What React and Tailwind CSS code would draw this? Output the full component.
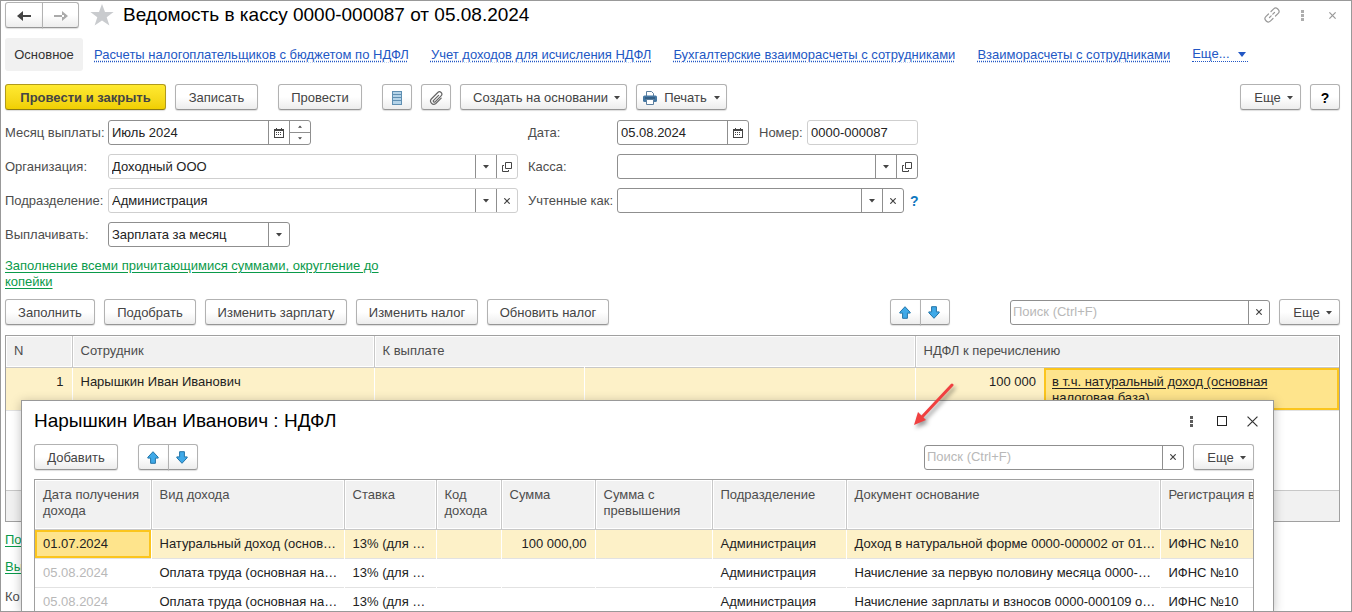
import { useState } from 'react';
import clsx from 'clsx';

const sectionLinks = [
  'Расчеты налогоплательщиков с бюджетом по НДФЛ',
  'Учет доходов для исчисления НДФЛ',
  'Бухгалтерские взаиморасчеты с сотрудниками',
  'Взаиморасчеты с сотрудниками',
];

const incomeColumns = [
  { title: 'Дата получения дохода', width: 'w-[116px]' },
  { title: 'Вид дохода', width: 'w-[193px]' },
  { title: 'Ставка', width: 'w-[92px]' },
  { title: 'Код дохода', width: 'w-[65px]' },
  { title: 'Сумма', width: 'w-[94px]' },
  { title: 'Сумма с превышения', width: 'w-[117px]' },
  { title: 'Подразделение', width: 'w-[134px]' },
  { title: 'Документ основание', width: 'w-[314px]' },
  { title: 'Регистрация в', width: 'whitespace-nowrap' },
];

const incomeRows = [
  {
    date: '01.07.2024',
    kind: 'Натуральный доход (основ…',
    rate: '13% (для …',
    sum: '100 000,00',
    base: 'Доход в натуральной форме 0000-000002 от 01…',
  },
  {
    date: '05.08.2024',
    kind: 'Оплата труда (основная на…',
    rate: '13% (для …',
    sum: '',
    base: 'Начисление за первую половину месяца 0000-…',
  },
  {
    date: '05.08.2024',
    kind: 'Оплата труда (основная на…',
    rate: '13% (для …',
    sum: '',
    base: 'Начисление зарплаты и взносов 0000-000109 о…',
  },
];

const buttonTones = {
  plain: 'border-[#b2b2b2] border-b-[#969696] from-white from-50% to-[#ededed] text-[#444]',
  primary: 'border-[#b09a1c] border-b-[#8f7c10] from-[#ffea30] to-[#f0cf00] font-bold text-[#444]',
  help: 'border-[#b2b2b2] border-b-[#969696] from-white from-50% to-[#ededed] text-sm font-bold text-black',
};

function Caret({ className = 'h-1 w-1.5' }) {
  return (
    <svg viewBox="0 0 6 4" className={clsx('shrink-0 fill-[#444]', className)} aria-hidden="true">
      <path d="M0 0h6L3 3.5z" />
    </svg>
  );
}

function CalendarIcon() {
  return (
    <svg viewBox="0 0 10 10" className="h-2.5 w-2.5" shapeRendering="crispEdges" aria-hidden="true">
      <path d="M0 1h2V0h1v1h4V0h1v1h2v9H0z" fill="#444" />
      <path d="M1 3h8v6H1z" fill="#fff" />
      <path d="M2 4h1v1H2zM4 4h1v1H4zM6 4h1v1H6zM2 6h1v1H2zM4 6h1v1H4zM6 6h1v1H6z" fill="#444" />
    </svg>
  );
}

function OpenIcon() {
  return (
    <svg viewBox="0 0 10 10" className="h-2.5 w-2.5" fill="none" stroke="#444" aria-hidden="true">
      <path d="M3.5.5h6v6h-6zM2 3.500H.5v6h6V8" />
    </svg>
  );
}

function CrossIcon({ className = 'h-1.5 w-1.5' }) {
  return (
    <svg viewBox="0 0 10 10" className={className} fill="none" stroke="currentColor" aria-hidden="true">
      <path d="M.5.5l9 9M9.5.5l-9 9" vectorEffect="non-scaling-stroke" strokeWidth="1.2" />
    </svg>
  );
}

function DotsIcon() {
  return (
    <svg viewBox="0 0 3 11" className="h-[11px] w-[3px]" fill="currentColor" shapeRendering="crispEdges" aria-hidden="true">
      <path d="M0 0h3v3H0zM0 4h3v3H0zM0 8h3v3H0z" opacity=".8" />
    </svg>
  );
}

function BlueArrow({ down = false }) {
  return (
    <svg viewBox="0 0 12 13" className={clsx('h-[13px] w-3', down && 'rotate-180')} aria-hidden="true">
      <path d="M6 .7l5.2 5.600v.8H8.400v5.200H3.600V7.100H.8v-.8z" fill="#3fa9e8" stroke="#2274a8" />
    </svg>
  );
}

function Button({ tone = 'plain', className = 'px-3', children, ...props }) {
  return (
    <button
      type="button"
      className={clsx(
        'flex h-[26px] shrink-0 items-center justify-center whitespace-nowrap rounded-[3px] border bg-linear-to-b pt-px shadow-[0_1px_1px_#00000022]',
        buttonTones[tone],
        className,
      )}
      {...props}
    >
      {children}
    </button>
  );
}

function MoreButton() {
  return (
    <Button className="w-[61px] gap-1.5 pl-1.5" aria-haspopup="menu">
      Еще
      <Caret />
    </Button>
  );
}

function MoveButtons() {
  return (
    <div className="flex">
      <Button className="w-[31px] rounded-r-none pr-0.5" aria-label="Переместить вверх">
        <BlueArrow />
      </Button>
      <Button className="-ml-px w-[30px] rounded-l-none pr-0.5" aria-label="Переместить вниз">
        <BlueArrow down />
      </Button>
    </div>
  );
}

function Field({ className = '', muted = false, children }) {
  return (
    <div
      className={clsx(
        'flex h-[25px] overflow-hidden rounded-[3px] border bg-white',
        muted ? 'border-[#cfcfcf]' : 'border-[#8f8f8f]',
        className,
      )}
    >
      {children}
    </div>
  );
}

function FieldButton({ children, ...props }) {
  return (
    <button type="button" className="flex w-[21px] shrink-0 items-center justify-center border-l border-[#8f8f8f] text-[#444]" {...props}>
      {children}
    </button>
  );
}

function Select({ id, value }) {
  return (
    <div className="relative flex min-w-0 flex-1">
      <select id={id} defaultValue={value} className="w-full appearance-none bg-transparent pl-[3px] text-[#222]">
        <option>{value}</option>
      </select>
      <span className="pointer-events-none absolute inset-y-0 right-0 flex w-[21px] items-center justify-center border-l border-[#8f8f8f]">
        <Caret />
      </span>
    </div>
  );
}

function Search({ id }) {
  return (
    <Field className="w-[260px]">
      <input id={id} type="text" aria-label="Поиск" placeholder="Поиск (Ctrl+F)" className="min-w-0 flex-1 px-0.5 placeholder:text-[#b8b8b8]" />
      <FieldButton aria-label="Очистить">
        <CrossIcon />
      </FieldButton>
    </Field>
  );
}

function TitleBar() {
  return (
    <header className="flex h-[26px] items-center">
      <div className="flex">
        <Button className="w-[38px] rounded-r-none" aria-label="Назад">
          <svg viewBox="0 0 14 10" className="h-2.5 w-3.5" aria-hidden="true">
            <path d="M6 0v10L0 5zM4 4h10v2H4z" fill="#444" />
          </svg>
        </Button>
        <Button className="-ml-px w-[37px] rounded-l-none" aria-label="Вперед">
          <svg viewBox="0 0 14 10" className="h-2.5 w-3.5" aria-hidden="true">
            <path d="M8 0v10l6-5zM0 4h10v2H0z" fill="#aaa" />
          </svg>
        </Button>
      </div>
      <button type="button" className="ml-[11px]" aria-label="В избранное">
        <svg viewBox="0 0 24 22" className="h-[22px] w-6" aria-hidden="true">
          <path d="M12 0l3 8h8.600l-6.900 5.200 2.700 8.300L12 16.400l-7.400 5.100 2.700-8.300L.4 8H9z" fill="#c9cbce" />
        </svg>
      </button>
      <h1 className="ml-[9px] text-[19px] leading-6 text-black">Ведомость в кассу 0000-000087 от 05.08.2024</h1>
      <div className="ml-auto flex items-center gap-[21px] pr-1 text-[#999]">
        <button type="button" aria-label="Получить ссылку">
          <svg viewBox="0 0 16 16" className="h-4 w-4" fill="none" stroke="currentColor" strokeWidth="1.200" strokeLinecap="round" aria-hidden="true">
            <path d="M7 4.500l2.700-2.700a2.700 2.700 0 0 1 3.800 0l.7.700a2.700 2.700 0 0 1 0 3.800L11.500 9M9 11.500l-2.700 2.700a2.700 2.700 0 0 1-3.800 0l-.7-.7a2.700 2.700 0 0 1 0-3.800L4.500 7M5.500 10.500l1.700-1.700M8.800 7.200l1.700-1.700" />
          </svg>
        </button>
        <button type="button" aria-label="Меню">
          <DotsIcon />
        </button>
        <button type="button" className="ml-1" aria-label="Закрыть">
          <CrossIcon className="h-[7px] w-[7px]" />
        </button>
      </div>
    </header>
  );
}

function SectionNav() {
  return (
    <nav className="mt-[9px] flex h-[34px] items-center gap-[22px] whitespace-nowrap pt-px text-[#2257c4]">
      <span className="-mr-[11px] flex h-full w-[78px] items-center justify-center rounded-[3px] bg-[#f1f1f1] text-[#333]">Основное</span>
      {sectionLinks.map((label) => (
        <a key={label} href="#" className="underline decoration-dotted underline-offset-2">
          {label}
        </a>
      ))}
      <a href="#" className="flex items-center gap-2 border-b border-dotted border-[#2257c4] pr-0.5 leading-3.5">
        Еще...
        <svg viewBox="0 0 8 5" className="h-[5px] w-2 fill-[#2257c4]" aria-hidden="true">
          <path d="M0 0h8L4 5z" />
        </svg>
      </a>
    </nav>
  );
}

function CommandBar() {
  return (
    <div className="mt-[13px] flex gap-[9px]">
      <Button tone="primary" className="w-[161px]">Провести и закрыть</Button>
      <Button className="w-[83px]">Записать</Button>
      <Button className="ml-[11px] w-[84px]">Провести</Button>
      <Button className="ml-[11px] w-[30px]" aria-label="Реестр">
        <svg viewBox="0 0 10 14" className="h-3.5 w-2.5" shapeRendering="crispEdges" aria-hidden="true">
          <path d="M0 0h10v14H0z" fill="#5f8fb2" />
          <path d="M1 1h8v2H1zM1 4h8v2H1zM1 7h8v2H1zM1 10h8v3H1z" fill="#b4d3e8" />
        </svg>
      </Button>
      <Button className="w-[30px]" aria-label="Присоединенные файлы">
        <svg viewBox="0 0 14 14" className="h-3.5 w-3.5" fill="none" stroke="#666" strokeWidth="1.200" strokeLinecap="round" aria-hidden="true">
          <path d="M9.600 4.300l-5 5a1 1 0 0 0 1.500 1.500l6-6a2.300 2.300 0 0 0-3.300-3.300L2.300 8a3.200 3.200 0 0 0 4.500 4.500l5.400-5.400" />
        </svg>
      </Button>
      <Button className="w-[167px] gap-1.5 pl-1.5" aria-haspopup="menu">
        Создать на основании
        <Caret />
      </Button>
      <Button className="w-[91px] gap-[7px]" aria-haspopup="menu">
        <svg viewBox="0 0 14 14" className="h-3.5 w-3.5" aria-hidden="true">
          <path d="M3.500 5V.5h5l2 2V5" fill="#fff" stroke="#5c7f9f" />
          <rect y="4.500" width="14" height="6.500" rx="1.500" fill="#4678a3" />
          <path d="M2 7h10" stroke="#24496b" />
          <path d="M3.500 8.500h7v5h-7z" fill="#fff" stroke="#5c7f9f" />
        </svg>
        Печать
        <Caret />
      </Button>
      <div className="ml-auto flex gap-[9px]">
        <MoreButton />
        <Button tone="help" className="w-[30px]">?</Button>
      </div>
    </div>
  );
}

function PaymentForm() {
  const [month, setMonth] = useState('Июль 2024');

  return (
    <form className="mt-2.5 flex gap-2.5 text-[#4d4d4d]">
      <div className="grid grid-cols-[103px_410px] items-center gap-y-[9px]">
        <label htmlFor="month">Месяц выплаты:</label>
        <Field className="w-[203px]">
          <input id="month" type="text" value={month} onChange={(e) => setMonth(e.target.value)} className="min-w-0 flex-1 px-[3px] text-[#222]" />
          <FieldButton aria-label="Выбрать месяц">
            <CalendarIcon />
          </FieldButton>
          <div className="flex w-[21px] flex-col border-l border-[#8f8f8f]">
            <button type="button" className="flex flex-1 items-center justify-center border-b border-[#8f8f8f]" aria-label="Следующий месяц">
              <Caret className="h-[3px] w-1 rotate-180" />
            </button>
            <button type="button" className="flex flex-1 items-center justify-center" aria-label="Предыдущий месяц">
              <Caret className="h-[3px] w-1" />
            </button>
          </div>
        </Field>

        <label htmlFor="organization">Организация:</label>
        <Field muted>
          <Select id="organization" value="Доходный ООО" />
          <FieldButton aria-label="Открыть организацию">
            <OpenIcon />
          </FieldButton>
        </Field>

        <label htmlFor="department">Подразделение:</label>
        <Field muted>
          <Select id="department" value="Администрация" />
          <FieldButton aria-label="Очистить подразделение">
            <CrossIcon />
          </FieldButton>
        </Field>

        <label htmlFor="payment">Выплачивать:</label>
        <Field className="w-[182px]">
          <Select id="payment" value="Зарплата за месяц" />
        </Field>
      </div>

      <div className="grid grid-cols-[89px_301px] content-start items-center gap-y-[9px]">
        <label htmlFor="date">Дата:</label>
        <div className="flex items-center">
          <Field className="w-[132px]">
            <input id="date" type="text" defaultValue="05.08.2024" className="min-w-0 flex-1 px-[3px] text-[#222]" />
            <FieldButton aria-label="Выбрать дату">
              <CalendarIcon />
            </FieldButton>
          </Field>
          <label htmlFor="number" className="ml-2.5 w-12">Номер:</label>
          <Field muted className="flex-1">
            <input id="number" type="text" defaultValue="0000-000087" className="min-w-0 flex-1 px-[3px] text-[#222]" />
          </Field>
        </div>

        <label htmlFor="cashbox">Касса:</label>
        <Field>
          <Select id="cashbox" value="" />
          <FieldButton aria-label="Открыть кассу">
            <OpenIcon />
          </FieldButton>
        </Field>

        <label htmlFor="accounted">Учтенные как:</label>
        <div className="flex items-center gap-1.5">
          <Field className="w-[287px] shrink-0">
            <Select id="accounted" value="" />
            <FieldButton aria-label="Очистить">
              <CrossIcon />
            </FieldButton>
          </Field>
          <button type="button" className="text-sm font-bold text-[#0f78c0]">?</button>
        </div>
      </div>
    </form>
  );
}

function EmployeesTable() {
  const headCell = 'border-r border-[#c8c8c8] px-2 text-left font-normal shadow-[inset_0_0_0_1px_#fff] last:border-r-0';

  return (
    <div className="mt-[10px] flex h-[187px] flex-col border border-[#a0a0a0]">
      <table className="w-full table-fixed">
        <colgroup>
          <col className="w-[66px]" />
          <col className="w-[302px]" />
          <col className="w-[210px]" />
          <col className="w-[331px]" />
          <col className="w-[129px]" />
          <col />
        </colgroup>
        <thead>
          <tr className="h-[31px] border-b border-[#c8c8c8] bg-[#f1f1f1] text-[#4d4d4d]">
            <th className={headCell}>N</th>
            <th className={headCell}>Сотрудник</th>
            <th className={headCell} colSpan={2}>К выплате</th>
            <th className={headCell} colSpan={2}>НДФЛ к перечислению</th>
          </tr>
        </thead>
        <tbody>
          <tr className="h-[43px] border-b border-[#e2e2e2] bg-[#fdf1c8] align-top leading-4 text-[#222]">
            <td className="border-r border-white px-2 pt-1.5 text-right">1</td>
            <td className="border-r border-white px-2 pt-1.5">Нарышкин Иван Иванович</td>
            <td className="border-r border-white" />
            <td className="border-r border-white" />
            <td className="px-2 pt-1.5 text-right">100 000</td>
            <td className="bg-[#fee48c] px-2 pt-1.5 shadow-[inset_0_0_0_2px_#fbc51d]">
              <a href="#" className="block w-[230px] underline underline-offset-2">
                в т.ч. натуральный доход (основная налоговая база)
              </a>
            </td>
          </tr>
        </tbody>
      </table>
      <div className="mt-auto h-[31px] border-t border-[#c8c8c8] bg-[#f1f1f1]" />
    </div>
  );
}

function IncomeDialog() {
  return (
    <section
      role="dialog"
      aria-labelledby="income-title"
      className="absolute bottom-0 left-5 right-[77px] top-[399px] overflow-hidden border border-b-0 border-[#999] bg-white px-3 shadow-[0_2px_10px_#00000040]"
    >
      <header className="mt-2 flex h-6 items-center pr-[3px] text-[#333]">
        <h2 id="income-title" className="text-[19px] text-black">Нарышкин Иван Иванович : НДФЛ</h2>
        <button type="button" className="ml-auto" aria-label="Меню">
          <DotsIcon />
        </button>
        <button type="button" className="ml-6 h-2.5 w-2.5 border border-[#222]" aria-label="Развернуть" />
        <button type="button" className="ml-5" aria-label="Закрыть">
          <CrossIcon className="h-[11px] w-[11px]" />
        </button>
      </header>

      <div className="mt-[11px] flex items-center pr-[7px]">
        <Button className="w-[84px]">Добавить</Button>
        <div className="ml-5">
          <MoveButtons />
        </div>
        <div className="ml-auto mr-[9px]">
          <Search id="income-search" />
        </div>
        <MoreButton />
      </div>

      <div className="mr-[7px] mt-[9px] overflow-hidden border border-b-0 border-[#a0a0a0]">
        <table className="w-full table-fixed">
          <thead>
            <tr className="h-[49px] border-b border-[#c8c8c8] bg-[#f1f1f1] align-top leading-4 text-[#4d4d4d]">
              {incomeColumns.map((column) => (
                <th
                  key={column.title}
                  className={clsx('border-r border-[#c8c8c8] pl-2 pt-[7px] text-left font-normal shadow-[inset_0_0_0_1px_#fff] last:border-r-0', column.width)}
                >
                  {column.title}
                </th>
              ))}
            </tr>
          </thead>
          <tbody>
            {incomeRows.map((row, index) => {
              const active = index === 0;
              const cell = clsx('whitespace-nowrap border-r pl-2 last:border-r-0', active ? 'border-white' : 'border-transparent');

              return (
                <tr key={row.base} className={clsx('h-[29px] border-b border-[#e2e2e2] text-[#222]', active && 'bg-[#fdf1c8]')}>
                  <td className={clsx(cell, active ? 'bg-[#fee48c] shadow-[inset_0_0_0_2px_#fbc51d]' : 'text-[#b8b8b8]')}>{row.date}</td>
                  <td className={cell}>{row.kind}</td>
                  <td className={cell}>{row.rate}</td>
                  <td className={cell} />
                  <td className={clsx(cell, 'pr-2 text-right')}>{row.sum}</td>
                  <td className={cell} />
                  <td className={cell}>Администрация</td>
                  <td className={cell}>{row.base}</td>
                  <td className={cell}>ИФНС №10</td>
                </tr>
              );
            })}
          </tbody>
        </table>
      </div>
    </section>
  );
}

export default function App() {
  return (
    <div className="relative h-screen overflow-hidden border border-[#999] bg-white pl-1 pr-[11px] pt-px font-['Liberation_Sans',Arial,sans-serif] text-[13px] leading-4">
      <TitleBar />
      <SectionNav />
      <CommandBar />
      <PaymentForm />

      <a href="#" className="mt-[11px] block w-[390px] text-[#0a9a4a] underline underline-offset-2">
        Заполнение всеми причитающимися суммами, округление до копейки
      </a>

      <div className="mt-[9px] flex items-center gap-[9px]">
        <Button className="w-[90px]">Заполнить</Button>
        <Button className="w-[92px]">Подобрать</Button>
        <Button className="w-[142px]">Изменить зарплату</Button>
        <Button className="w-[122px]">Изменить налог</Button>
        <Button className="w-[122px]">Обновить налог</Button>
        <div className="ml-auto mr-[51px]">
          <MoveButtons />
        </div>
        <Search id="employee-search" />
        <MoreButton />
      </div>

      <EmployeesTable />

      <footer className="mt-2.5 flex flex-col items-start gap-[11px]">
        <a href="#" className="text-[#0a9a4a] underline underline-offset-2">По</a>
        <a href="#" className="text-[#0a9a4a] underline underline-offset-2">Вы</a>
        <span className="mt-[3px] text-[#4d4d4d]">Ко</span>
      </footer>

      <IncomeDialog />

      {/* pointer from the tax cell to the opened breakdown */}
      <svg viewBox="0 0 48 52" className="pointer-events-none absolute left-[909px] top-[379px] h-[52px] w-12 drop-shadow-[2px_3px_2px_#00000066]" aria-hidden="true">
        <path d="M42 5L12 37" stroke="#f04040" strokeWidth="3" strokeLinecap="round" />
        <path d="M4 45l4-13 8 8z" fill="#f04040" />
      </svg>
    </div>
  );
}
